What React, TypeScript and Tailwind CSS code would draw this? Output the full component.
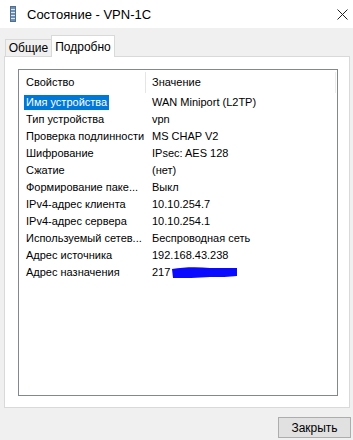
import React from 'react';

const rows: [string, string][] = [
  ['Имя устройства', 'WAN Miniport (L2TP)'],
  ['Тип устройства', 'vpn'],
  ['Проверка подлинности', 'MS CHAP V2'],
  ['Шифрование', 'IPsec: AES 128'],
  ['Сжатие', '(нет)'],
  ['Формирование паке...', 'Выкл'],
  ['IPv4-адрес клиента', '10.10.254.7'],
  ['IPv4-адрес сервера', '10.10.254.1'],
  ['Используемый сетев...', 'Беспроводная сеть'],
  ['Адрес источника', '192.168.43.238'],
  ['Адрес назначения', '217'],
];

function WindowIcon() {
  return (
    <svg width="6" height="16" viewBox="0 0 6 16">
      <rect x="0" y="0" width="6" height="16" fill="#6f8fb3" />
      <rect x="0.5" y="0.5" width="5" height="15" fill="none" stroke="#4e6e93" />
      {[3, 6, 9, 12].map((y) => (
        <rect key={y} x="1" y={y} width="4" height="1" fill="#dfe8f2" />
      ))}
    </svg>
  );
}

// blue marker stroke hiding the address
function Scribble() {
  return (
    <svg
      className="absolute left-0 top-[1px]"
      width="66"
      height="12"
      viewBox="0 0 66 12"
    >
      <path
        d="M0 2 C12 0 26 0 38 1 C48 1 57 1 65 1 L65 9 C57 10 48 10 38 10 C26 11 12 11 1 11 Z"
        fill="#0a0aff"
      />
    </svg>
  );
}

export default function App(): JSX.Element {
  return (
    <div
      className="w-[353px] h-[440px] bg-[#f0f0f0] flex flex-col text-black overflow-hidden"
      style={{ fontFamily: '"Liberation Sans", Arial, sans-serif' }}
    >
      {/* title bar */}
      <div className="h-[28px] bg-white flex items-center shrink-0">
        <div className="ml-[10px] mt-[-1px] flex">
          <WindowIcon />
        </div>
        <span className="ml-[11px] text-[13px] leading-none whitespace-nowrap">Состояние - VPN-1C</span>
        <div className="ml-auto mr-[5px] w-[12px] h-[12px] flex items-center justify-center">
          <svg width="11" height="11" viewBox="0 0 11 11">
            <path d="M0.5 0.5 L10.5 10.5 M10.5 0.5 L0.5 10.5" stroke="#222" strokeWidth="1" />
          </svg>
        </div>
      </div>

      {/* tabs */}
      <div className="h-[28px] flex items-end pl-[5px] shrink-0 relative z-10">
        <div className="h-[17px] w-[47px] bg-[#f0f0f0] border border-b-0 border-[#d9d9d9] flex items-center justify-center text-[12px]">
          Общие
        </div>
        <div className="h-[22px] w-[64px] ml-[-1px] mb-[-1px] bg-white border border-b-0 border-[#d9d9d9] flex items-start justify-center pt-[2px] text-[12px]">
          Подробно
        </div>
      </div>

      {/* tab panel */}
      <div className="ml-[4px] w-[346px] h-[352px] bg-white border border-[#d9d9d9] shrink-0 pl-[13px] pr-[11px] pt-[12px] pb-[11px]">
        <div className="h-full border border-[#828790] text-[11px] whitespace-nowrap">
          <div className="h-[24px] flex items-center">
            <div className="w-[127px] shrink-0 h-[21px] border-r border-[#e5e5e5] flex items-center pl-[7px]">
              Свойство
            </div>
            <div className="pl-[6px] flex-1">Значение</div>
            <div className="w-px h-[21px] bg-[#ececec] mr-[1px]" />
          </div>
          {rows.map(([name, value], i) => (
            <div key={name} className="h-[17px] flex items-center">
              <div className="w-[127px] shrink-0 pl-[5px] flex items-center">
                <span
                  className={
                    i === 0
                      ? 'px-[2px] h-[15px] flex items-center bg-[#0078d7] text-white'
                      : 'px-[2px] h-[15px] flex items-center'
                  }
                >
                  {name}
                </span>
              </div>
              <div className="pl-[6px] flex items-center">
                {value}
                {i === rows.length - 1 && (
                  <span className="relative block shrink-0 ml-[2px] w-[66px] h-[14px]">
                    <Scribble />
                  </span>
                )}
              </div>
            </div>
          ))}
        </div>
      </div>

      {/* buttons */}
      <div className="flex justify-end pr-[2px] pt-[9px]">
        <button className="w-[73px] h-[21px] bg-[#e1e1e1] border border-[#adadad] text-[12px] flex items-center justify-center">
          Закрыть
        </button>
      </div>
    </div>
  );
}
